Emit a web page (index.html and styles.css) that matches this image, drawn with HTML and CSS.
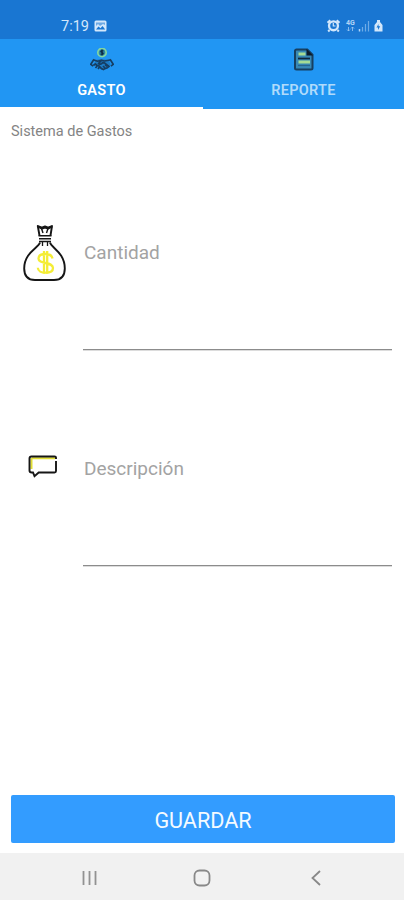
FILE: index.html
```html
<!doctype html>
<html lang="es">
<head>
	<meta charset="UTF-8">
	<title>Sistema de Gastos</title>
	<link rel="stylesheet" href="styles.css">
</head>
<body>
	<div class="screen">
		<div class="status">
			<span class="time">7:19</span>
			<svg class="picture" width="13" height="12" viewBox="0 0 13 12">
				<rect x="0.5" y="0.5" width="12" height="11" rx="1.5" fill="#d3e7fb"/>
				<path d="M2 9.5l2.5-3 2 1.800 2-2.300 2.700 3.500z" fill="#1976d2"/>
				<path d="M2 2.500h9v2.500l-2-1-3 2-2-2-2 2z" fill="#1976d2" opacity=".55"/>
			</svg>
			<svg class="signals" width="60" height="16" viewBox="0 0 60 16">
				<circle cx="7.500" cy="7.800" r="5.600" fill="#d3e7fb"/>
				<path d="M1.500 4.800l2.800-2.600M13.500 4.800l-2.800-2.600M3.500 12l-1.300 1.500M11.500 12l1.300 1.500" stroke="#d3e7fb" stroke-width="2"/>
				<circle cx="7.500" cy="7.800" r="3.300" fill="#1976d2"/>
				<path d="M7.300 5v3h2.200" fill="none" stroke="#d3e7fb" stroke-width="1.200"/>
				<text x="20" y="7" class="net">4G</text>
				<path d="M22.500 9v4M21 11.500l1.500 1.500 1.500-1.500M26.500 13V9M25 10.500L26.500 9l1.500 1.500" fill="none" stroke="#9fc9f2" stroke-width=".8"/>
				<path d="M33.500 11v2.500" stroke="#b4d5f6" stroke-width="1.500"/>
				<path d="M36.500 9v4.500M39.500 6v7.500M42.500 3v10.500" stroke="#6eabe7" stroke-width="1.200"/>
				<path d="M51 2h3v2l2.500 3v6.500h-8V7L51 4z" fill="#d3e7fb"/>
				<path d="M52.500 6l-2 3.500h1.500v2.500l2.200-3.700h-1.700z" fill="#1976d2"/>
			</svg>
		</div>

		<div class="tabs">
			<div class="tab select">
				<svg width="24" height="24" viewBox="0 0 24 24">
					<circle cx="12" cy="4.500" r="4.200" fill="#2f87a8" stroke="#83d6a0" stroke-width="1.700"/>
					<path d="M13.500 3c-3-1-3.500 1.200-1.500 1.500s1.500 2.500-1.500 1.500M12 1.500v6" fill="none" stroke="#0e2942" stroke-width="1.200"/>
					<path d="M5 12l6-1 8 1 1.500 5-3.500 3-5 2-5-3-2.500-3z" fill="#1c6aa8" opacity=".6"/>
					<g fill="none" stroke="#153e63" stroke-width="1.700" stroke-linejoin="round">
						<path d="M4 11.300l-3.200 5 2.300 1.800M20 11.300l3.200 5-2.300 1.800"/>
						<path d="M4 12l3.500 1.200 4-1 3 .8L20 12M11.500 12.300l-3 3.200c1 1.200 2.800.8 4-.8l2 .2 5 4"/>
						<path d="M3.300 17.500l2-1.500 1.800 1.500 1.600.2 1.600 1.600 1.500 1.500 1.600.8 1.500-1 2-.6 2.400-2"/>
						<path d="M5.500 20l1.600-2M8 21l1.500-2M13 18l2 2M15 16.500l2 2"/>
					</g>
				</svg>
				<span>GASTO</span>
			</div>
			<div class="tab">
				<svg width="24" height="24" viewBox="0 0 24 24">
					<path d="M4.500 1.500h10.800l5.200 5.200V20a1.500 1.500 0 0 1-1.500 1.500H4.500A1.500 1.500 0 0 1 3 20V3a1.500 1.500 0 0 1 1.500-1.500z" fill="#3788b5" stroke="#173f60" stroke-width="2"/>
					<path d="M14.500 1l6.500 6.500h-6.500z" fill="#0b1b2b"/>
					<path d="M6.500 6h7M6.500 14h11.500" stroke="#a6dc94" stroke-width="3"/>
					<path d="M6 10.500h12" stroke="#10273b" stroke-width="1.700"/>
					<path d="M6 17.500h12" stroke="#28658e" stroke-width="1.200"/>
				</svg>
				<span>REPORTE</span>
			</div>
		</div>

		<div class="content">
			<p class="heading">Sistema de Gastos</p>

			<div class="field">
				<svg width="44" height="60" viewBox="0 0 44 60">
					<g fill="none" stroke="#161616" stroke-width="1.900" stroke-linejoin="round">
						<path d="M16.500 11.500L14.800 2l4 1.700L22 2.500l3.200 1.200L29 2l-1.500 9.500"/>
						<path d="M15 2.500l4 2 3-1 3 1 4-2" stroke-width="2"/>
						<path d="M18.500 4.500l1.500 4.500M25 4.500L23.500 9" stroke-width="1.400"/>
						<path d="M15.500 11.700h13M16 14.700h12M16 17.500h12" stroke-width="1.600"/>
						<path d="M17 18.500c-1 5-15.800 10-15.800 26C1.200 52 5 56 12 56h19c7 0 10.800-4 10.800-11.500 0-16-13.800-21-14.800-26"/>
						<path d="M19.500 18v4M24.500 18v4" stroke-width="1.300"/>
					</g>
					<path d="M29.500 34.500c-.5-3-3.500-4.500-7-4.500-4 0-7 1.500-7 4.500s3 3.700 7 4.500 7.500 1.500 7.500 5-3.500 4.700-7.500 4.700-7.500-1.700-7.700-5M21 27v23M24.200 27v23" fill="none" stroke="#f4ed36" stroke-width="2.300"/>
				</svg>
				<input class="amount" type="text" placeholder="Cantidad">
			</div>

			<div class="field">
				<svg width="44" height="60" viewBox="0 0 44 60">
					<path d="M9 18.300h23M8.500 18v11" fill="none" stroke="#e2df35" stroke-width="2"/>
					<path d="M33 19v-1.500q0-1-1.500-1H8.500Q6.500 16.500 6.500 18.500V30.500q0 2 2.200 2h1.300l1.500 3.700 4.200-3.700H31.500q1.500 0 1.500-1.500V21" fill="none" stroke="#161616" stroke-width="1.900"/>
				</svg>
				<input class="detail" type="text" placeholder="Descripción">
			</div>

			<button class="save">GUARDAR</button>
		</div>

		<div class="navbar">
			<svg width="18" height="18" viewBox="0 0 18 18"><path d="M3.500 2v14M9.500 2v14M15.500 2v14" stroke="#929292" stroke-width="1.800"/></svg>
			<svg width="18" height="18" viewBox="0 0 18 18"><rect x="1.500" y="1.500" width="15" height="15" rx="5" fill="none" stroke="#888" stroke-width="1.800"/></svg>
			<svg width="18" height="18" viewBox="0 0 18 18"><path d="M14 2L6.500 9l7.500 7" fill="none" stroke="#888" stroke-width="1.800"/></svg>
		</div>
	</div>
</body>
</html>
```
FILE: styles.css
```css
*{
	margin:0;
	padding:0;
	box-sizing:border-box;
}

body{
	font-family:Roboto, "Liberation Sans", sans-serif;
	background:#fff;
}

svg{
	display:block;
	flex:none;
}

.screen{
	display:flex;
	flex-direction:column;
	width:404px;
	height:900px;
}

.status{
	display:flex;
	align-items:center;
	height:39px;
	padding:13px 18px 0 61px;
	background:#1976d2;
	color:#d3e7fb;
}

.time{
	width:33px;
	font-size:14.5px;
}

.signals{
	margin-left:auto;
}

.net{
	font-size:7px;
	font-weight:bold;
	fill:#b4d5f6;
}

.tabs{
	display:flex;
	height:70px;
	background:#2196f3;
}

.tab{
	display:flex;
	flex-direction:column;
	align-items:center;
	width:201px;
	padding-top:9px;
	font-size:14.5px;
	font-weight:600;
	line-height:16px;
	letter-spacing:.3px;
	color:#b0dbfb;
}

.tab span{
	margin-top:11px;
}

.tab.select{
	width:203px;
	color:#fff;
	border-bottom:2px solid #fff;
}

.content{
	display:flex;
	flex-direction:column;
	flex:1;
	padding:13px 9px 10px 11px;
}

.heading{
	padding-top:1px;
	font-size:14.5px;
	line-height:17px;
	color:#848484;
}

.field{
	display:flex;
	height:216px;
	padding:0 3px 0 12px;
}

.field svg{
	margin-top:84px;
}

.field input{
	align-self:flex-start;
	width:309px;
	height:195px;
	margin:15px 0 0 16px;
	padding:1px 0 0 1px;
	border:none;
	border-bottom:1px solid #8c8c8c;
	box-shadow:0 1px 0 #dcdcdc;
	outline:none;
	font-family:inherit;
	font-size:19px;
	color:#333;
	background:none;
}

.field input::placeholder{
	color:#a3a3a3;
}

.save{
	height:48px;
	margin-top:auto;
	padding-top:2px;
	border:none;
	border-radius:2px;
	background:#339cff;
	color:#f4faff;
	font-family:inherit;
	font-size:21.6px;
}

.navbar{
	display:flex;
	justify-content:space-between;
	align-items:center;
	height:47px;
	padding:2px 80px 0 80px;
	background:#f1f1f1;
}
```
